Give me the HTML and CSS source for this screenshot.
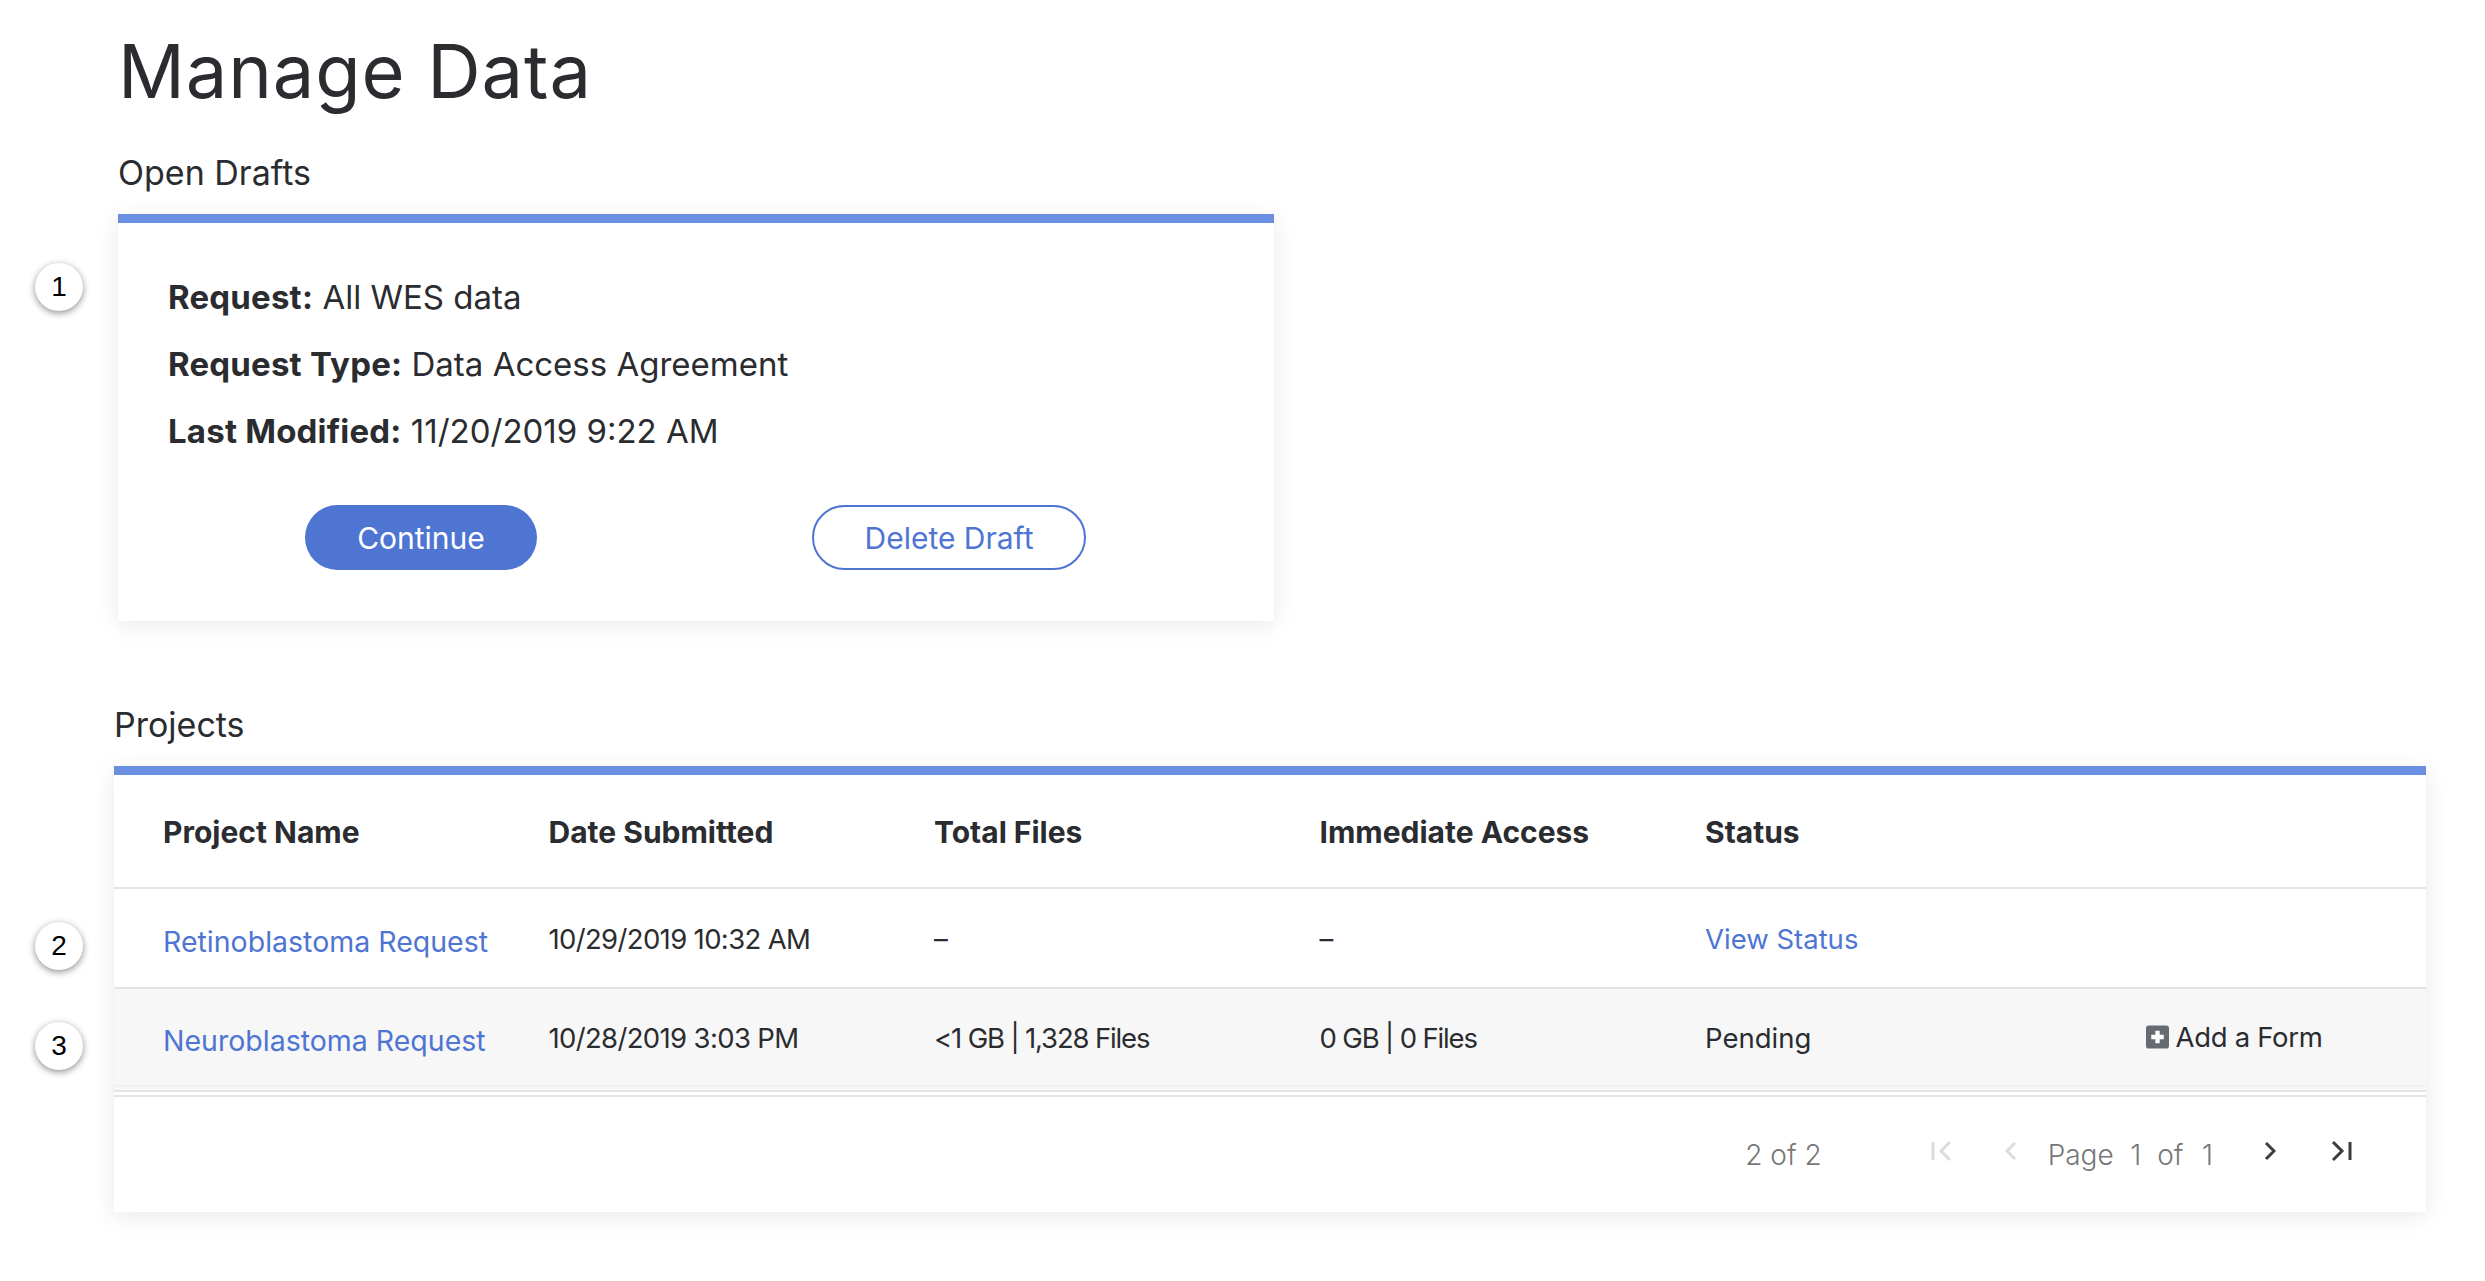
FILE: index.html
```html
<!DOCTYPE html>
<html lang="en">
<head>
    <meta charset="UTF-8">
    <title>Manage Data</title>
    <link rel="stylesheet" href="styles.css">
</head>
<body>
    <h1 class="page-title">Manage Data</h1>

    <section class="drafts">
        <h2 class="section-title">Open Drafts</h2>
        <div class="card draft-card">
            <p class="draft-line"><b>Request:</b> All WES data</p>
            <p class="draft-line"><b>Request Type:</b> Data Access Agreement</p>
            <p class="draft-line"><b>Last Modified:</b> 11/20/2019 9:22 AM</p>
            <div class="draft-actions">
                <button type="button" class="btn btn-primary">Continue</button>
                <button type="button" class="btn btn-outline">Delete Draft</button>
            </div>
        </div>
    </section>

    <section class="projects">
        <h2 class="section-title">Projects</h2>
        <div class="card">
            <table class="project-table">
                <thead>
                    <tr>
                        <th>Project Name</th>
                        <th>Date Submitted</th>
                        <th>Total Files</th>
                        <th>Immediate Access</th>
                        <th>Status</th>
                        <th></th>
                    </tr>
                </thead>
                <tbody>
                    <tr>
                        <td class="name-cell"><a href="#">Retinoblastoma Request</a></td>
                        <td class="date-cell">10/29/2019 10:32 AM</td>
                        <td>–</td>
                        <td>–</td>
                        <td><a href="#">View Status</a></td>
                        <td></td>
                    </tr>
                    <tr class="row-alt">
                        <td class="name-cell"><a href="#">Neuroblastoma Request</a></td>
                        <td class="date-cell">10/28/2019 3:03 PM</td>
                        <td class="size-cell">&lt;1 GB | 1,328 Files</td>
                        <td class="size-cell">0 GB | 0 Files</td>
                        <td>Pending</td>
                        <td>
                            <span class="add-form">
                                <svg class="add-icon" viewBox="0 0 24 24"><rect width="24" height="24" rx="3" fill="#666b73"/><path d="M12 5.5v13M5.5 12h13" stroke="#fff" stroke-width="4.5"/></svg>
                                Add a Form
                            </span>
                        </td>
                    </tr>
                </tbody>
            </table>
            <div class="pager">
                <span class="pager-count">2 of 2</span>
                <svg class="pager-icon icon-first" viewBox="0 0 22 22"><path d="M2 2v18M19 2l-9 9 9 9" fill="none" stroke="#dcdcdc" stroke-width="3"/></svg>
                <svg class="pager-icon icon-prev" viewBox="0 0 12 22"><path d="M10 3l-8 8 8 8" fill="none" stroke="#dcdcdc" stroke-width="3"/></svg>
                <span class="pager-page">Page</span>
                <span class="pager-num">1</span>
                <span class="pager-of">of</span>
                <span class="pager-total">1</span>
                <svg class="pager-icon icon-next" viewBox="0 0 12 22"><path d="M2 3l8 8-8 8" fill="none" stroke="#3a3c40" stroke-width="3"/></svg>
                <svg class="pager-icon icon-last" viewBox="0 0 22 22"><path d="M3 2l9 9-9 9M20 2v18" fill="none" stroke="#3a3c40" stroke-width="3"/></svg>
            </div>
        </div>
    </section>

    <span class="marker marker-1">1</span>
    <span class="marker marker-2">2</span>
    <span class="marker marker-3">3</span>
</body>
</html>
```

FILE: styles.css
```css
body {
    position: relative;
    margin: 0;
    height: 1281px;
    background: #fff;
    color: #2a2c30;
    font-family: Inter, "Open Sans", sans-serif;
    overflow: hidden;
}
.page-title {
    margin: 26px 0 0 118px;
    font-size: 74px;
    line-height: 90px;
    font-weight: 400;
    letter-spacing: 0.9px;
}
.section-title {
    margin: 0 0 21px;
    font-size: 34px;
    line-height: 40px;
    font-weight: 400;
}
.card {
    background: #fff;
    border-top: 9px solid #6a8fe0;
    box-shadow: 0 4px 22px rgba(0, 0, 0, 0.09);
}
.drafts {
    width: 1156px;
    margin: 37px 0 0 118px;
}
.draft-card {
    padding: 41px 51px 51px 50px;
}
.draft-line {
    margin: 0;
    font-size: 33px;
    line-height: 67px;
}
.draft-line b {
    letter-spacing: 0.2px;
}
.draft-actions {
    display: flex;
    gap: 275px;
    margin: 40px 0 0 137px;
}
.btn {
    height: 65px;
    border-radius: 33px;
    font-family: inherit;
    font-size: 30px;
    padding: 0;
}
.btn-primary {
    width: 232px;
    background: #4f75d3;
    border: none;
    color: #fff;
}
.btn-outline {
    width: 274px;
    background: #fff;
    border: 2px solid #4f75d3;
    color: #4f75d3;
}
.projects {
    width: 2312px;
    margin: 84px 0 0 114px;
}
.project-table {
    width: 100%;
    border-collapse: collapse;
    table-layout: fixed;
    font-size: 27.5px;
}
.project-table th,
.project-table td {
    box-sizing: border-box;
    width: 385.5px;
    padding: 2px 0 0 49px;
    text-align: left;
}
.project-table th:last-child,
.project-table td:last-child {
    width: auto;
}
.project-table th {
    height: 113px;
    font-size: 30px;
    font-weight: 700;
    border-bottom: 2px solid #e4e4e4;
}
.project-table td {
    height: 100px;
    border-bottom: 2px solid #e4e4e4;
}
.project-table a {
    color: #4f75d3;
    text-decoration: none;
}
.project-table .name-cell {
    padding-top: 6px;
    font-size: 28.5px;
}
.date-cell {
    letter-spacing: -0.65px;
}
.size-cell {
    letter-spacing: -1.15px;
}
.row-alt {
    background: #f7f7f7;
}
.project-table .row-alt td {
    height: 103px;
    padding-bottom: 5px;
    background: linear-gradient(#ededed, #ededed) 0 calc(100% - 4px) / 100% 1px no-repeat;
}
.add-form {
    display: inline-flex;
    align-items: center;
    gap: 7px;
    margin-left: 55px;
    letter-spacing: -0.3px;
}
.add-icon {
    width: 23px;
    height: 24px;
}
.pager {
    display: flex;
    justify-content: flex-end;
    align-items: center;
    height: 115px;
    margin-top: 3px;
    padding-right: 74px;
    border-top: 2px solid #e4e4e4;
    color: #777;
    font-size: 28px;
    font-weight: 300;
}
.pager-count {
    margin-right: 109px;
}
.pager-icon {
    height: 22px;
    margin-top: -8px;
}
.icon-first {
    width: 22px;
    margin-right: 52px;
}
.icon-prev {
    width: 12px;
    margin-right: 31px;
}
.pager-num {
    margin-left: 16.5px;
}
.pager-of {
    margin-left: 16px;
}
.pager-total {
    margin-left: 18.5px;
}
.icon-next {
    width: 12px;
    margin-left: 51px;
}
.icon-last {
    width: 22px;
    margin-left: 54px;
}
.marker {
    position: absolute;
    left: 35px;
    width: 48px;
    height: 48px;
    border-radius: 50%;
    background: #fff;
    box-shadow: 0 2px 7px rgba(0, 0, 0, 0.45);
    color: #000;
    font-family: "Liberation Sans", Arial, sans-serif;
    font-size: 28px;
    line-height: 48px;
    text-align: center;
}
.marker-1 { top: 263px; }
.marker-2 { top: 922px; }
.marker-3 { top: 1022px; }
```
